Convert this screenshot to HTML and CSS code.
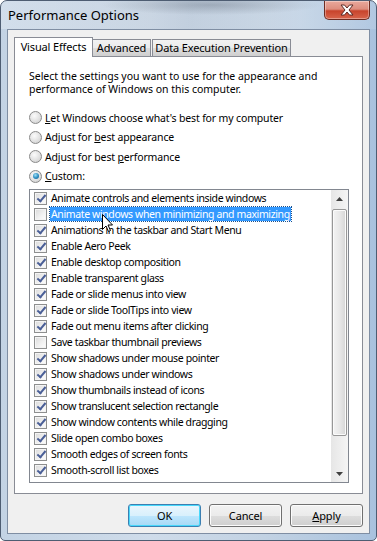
FILE: index.html
```html
<!DOCTYPE html>
<html>
<head>
    <title>Performance Options</title>
    <link rel="stylesheet" href="styles.css">
</head>
<body>
    <div class="window">
        <div class="titlebar">
            <span class="title">Performance Options</span>
            <div class="close">
                <svg width="16" height="12" viewBox="0 0 16 12">
                    <path d="M2 1 L5.5 1 L8 4 L10.5 1 L14 1 L10 6 L14 11 L10.5 11 L8 8 L5.5 11 L2 11 L6 6 Z" fill="#fff" stroke="#5b2b26" stroke-width="1"/>
                </svg>
            </div>
        </div>

        <div class="client">
            <div class="tabs">
                <div class="tab active">Visual Effects</div>
                <div class="tab adv">Advanced</div>
                <div class="tab dep">Data Execution Prevention</div>
            </div>

            <div class="panel">
                <p class="intro">Select the settings you want to use for the appearance and<br>performance of Windows on this computer.</p>

                <div class="radios">
                    <div class="radio"><span class="dot"></span><span><u>L</u>et Windows choose what's best for my computer</span></div>
                    <div class="radio"><span class="dot"></span><span>Adjust for <u>b</u>est appearance</span></div>
                    <div class="radio"><span class="dot"></span><span>Adjust for best <u>p</u>erformance</span></div>
                    <div class="radio"><span class="dot on"></span><span><u>C</u>ustom:</span></div>
                </div>

                <div class="listbox">
                    <div class="items">
                        <div class="item"><span class="cb on"></span><span class="lbl">Animate controls and elements inside windows</span></div>
                        <div class="item"><span class="cb"></span><span class="lbl selected">Animate windows when minimizing and maximizing</span></div>
                        <div class="item"><span class="cb on"></span><span class="lbl">Animations in the taskbar and Start Menu</span></div>
                        <div class="item"><span class="cb on"></span><span class="lbl">Enable Aero Peek</span></div>
                        <div class="item"><span class="cb on"></span><span class="lbl">Enable desktop composition</span></div>
                        <div class="item"><span class="cb on"></span><span class="lbl">Enable transparent glass</span></div>
                        <div class="item"><span class="cb on"></span><span class="lbl">Fade or slide menus into view</span></div>
                        <div class="item"><span class="cb on"></span><span class="lbl">Fade or slide ToolTips into view</span></div>
                        <div class="item"><span class="cb on"></span><span class="lbl">Fade out menu items after clicking</span></div>
                        <div class="item"><span class="cb"></span><span class="lbl">Save taskbar thumbnail previews</span></div>
                        <div class="item"><span class="cb on"></span><span class="lbl">Show shadows under mouse pointer</span></div>
                        <div class="item"><span class="cb on"></span><span class="lbl">Show shadows under windows</span></div>
                        <div class="item"><span class="cb on"></span><span class="lbl">Show thumbnails instead of icons</span></div>
                        <div class="item"><span class="cb on"></span><span class="lbl">Show translucent selection rectangle</span></div>
                        <div class="item"><span class="cb on"></span><span class="lbl">Show window contents while dragging</span></div>
                        <div class="item"><span class="cb on"></span><span class="lbl">Slide open combo boxes</span></div>
                        <div class="item"><span class="cb on"></span><span class="lbl">Smooth edges of screen fonts</span></div>
                        <div class="item"><span class="cb on"></span><span class="lbl">Smooth-scroll list boxes</span></div>
                    </div>
                    <div class="scrollbar">
                        <div class="arrow"><svg width="7" height="4" viewBox="0 0 7 4"><path d="M0 4 L3.5 0 L7 4 Z" fill="#404040"/></svg></div>
                        <div class="track"><div class="thumb"></div></div>
                        <div class="arrow"><svg width="7" height="4" viewBox="0 0 7 4"><path d="M0 0 L7 0 L3.5 4 Z" fill="#404040"/></svg></div>
                    </div>
                    <svg class="cursor" width="12" height="19" viewBox="0 0 12 19">
                        <path d="M0.5 0.5 L0.5 15.5 L4 12 L6.5 17.5 L8.5 16.5 L6 11 L10.5 11 Z" fill="#fff" stroke="#000" stroke-width="1"/>
                    </svg>
                </div>
            </div>

            <div class="buttons">
                <div class="btn default">OK</div>
                <div class="btn">Cancel</div>
                <div class="btn"><u>A</u>pply</div>
            </div>
        </div>
    </div>
</body>
</html>
```

FILE: styles.css
```css
body {
    margin: 0;
    padding: 0;
    background: #fff;
    font-family: "Noto Sans", "Open Sans", sans-serif;
    font-size: 10.5px;
    letter-spacing: -0.15px;
    color: #000;
}

.window {
    width: 377px;
    height: 541px;
    box-sizing: border-box;
    border: 1px solid #4e5d72;
    border-radius: 7px 7px 5px 5px;
    background: linear-gradient(90deg, #c3d3e4 0%, #cfdcea 40%, #c2d2e3 70%, #a9c2de 100%);
    display: flex;
    flex-direction: column;
    overflow: hidden;
}

.titlebar {
    height: 28px;
    flex: none;
    display: flex;
    align-items: flex-start;
    background:
        radial-gradient(ellipse 110px 10px at 210px 4px, rgba(90,100,115,0.35), rgba(90,100,115,0) 100%),
        linear-gradient(90deg, rgba(255,255,255,0.25), rgba(160,170,185,0.2) 50%, rgba(255,255,255,0.2) 80%, rgba(255,255,255,0.1));
}

.title {
    font-size: 13px;
    letter-spacing: 0;
    padding-left: 7px;
    line-height: 28px;
    color: #000;
}

.close {
    margin-left: auto;
    margin-right: 6px;
    width: 46px;
    height: 19px;
    box-sizing: border-box;
    border: 1px solid #6d2c22;
    border-top: none;
    border-radius: 0 0 5px 5px;
    background: linear-gradient(180deg, #e9a99c 0%, #dd8d7e 45%, #c8442c 55%, #d8654c 100%);
    display: flex;
    align-items: center;
    justify-content: center;
    box-shadow: inset 0 0 0 1px rgba(255,255,255,0.35);
}

.client {
    flex: 1;
    margin: 0 6px 6px 6px;
    border: 1px solid #7f8ea3;
    background: #f0f0f0;
    padding: 7px 6px 0 6px;
    display: flex;
    flex-direction: column;
}

.tabs {
    height: 20px;
    display: flex;
    align-items: flex-end;
    flex: none;
}

.tab {
    height: 17px;
    box-sizing: border-box;
    border: 1px solid #898c95;
    border-bottom: none;
    background: linear-gradient(180deg, #f2f2f2 0%, #ebebeb 50%, #dddddd 51%, #cfcfcf 100%);
    text-align: center;
    line-height: 15px;
    font-size: 11px;
    margin-bottom: 1px;
}

.tab.active {
    position: relative;
    z-index: 1;
    height: 20px;
    width: 79px;
    margin-bottom: 0;
    background: #fff;
    line-height: 18px;
}

.tab.adv {
    width: 58px;
    border-left: none;
}

.tab.dep {
    width: 139px;
    margin-left: 1px;
}

.panel {
    margin-top: -1px;
    height: 438px;
    flex: none;
    box-sizing: border-box;
    border: 1px solid #898c95;
    background: #fff;
    padding: 0 13px 0 14px;
}

.intro {
    margin: 13px 0 0 0;
    line-height: 13px;
    letter-spacing: -0.02px;
}

.radios {
    margin-top: 12px;
}

.radio {
    height: 19.5px;
    display: flex;
    align-items: center;
}

.dot {
    width: 13px;
    height: 13px;
    box-sizing: border-box;
    border-radius: 50%;
    border: 1px solid #8a8a8a;
    background: radial-gradient(circle at 40% 35%, #fbfbfb 0%, #e6e6e6 45%, #c9c9c9 100%);
    margin-right: 3px;
    position: relative;
}

.dot.on::after {
    content: "";
    position: absolute;
    left: 2.5px;
    top: 2.5px;
    width: 6px;
    height: 6px;
    border-radius: 50%;
    background: radial-gradient(circle at 40% 35%, #9fe0f7 0%, #2a8bbf 55%, #165d8c 100%);
}

.listbox {
    position: relative;
    margin-top: 3px;
    height: 294px;
    box-sizing: border-box;
    border: 1px solid #828790;
    display: flex;
}

.items {
    flex: 1;
    padding-left: 4px;
    letter-spacing: -0.38px;
}

.item {
    height: 16px;
    display: flex;
    align-items: center;
}

.cb {
    width: 13px;
    height: 13px;
    box-sizing: border-box;
    border: 1px solid #8e8f8f;
    background: linear-gradient(135deg, #d9d9d9 0%, #f2f2f2 60%, #fdfdfd 100%);
    box-shadow: inset 0 0 0 1px #f4f4f4;
    margin-right: 3px;
    position: relative;
}

.cb.on::after {
    content: "";
    position: absolute;
    left: 3.5px;
    top: 0.5px;
    width: 3px;
    height: 7px;
    border-right: 2px solid #4a5f97;
    border-bottom: 2px solid #4a5f97;
    transform: rotate(40deg);
}

.lbl {
    padding: 0 1px;
    line-height: 14px;
}

.lbl.selected {
    background: #3399ff;
    color: #fff;
    outline: 1px dotted #1a4f8a;
}

.scrollbar {
    width: 17px;
    flex: none;
    display: flex;
    flex-direction: column;
    background: linear-gradient(90deg, #e6e6e6, #f5f5f5);
}

.arrow {
    height: 17px;
    flex: none;
    display: flex;
    align-items: center;
    justify-content: center;
}

.track {
    flex: 1;
    padding-top: 2px;
}

.thumb {
    margin: 0 1px;
    height: 227px;
    box-sizing: border-box;
    border: 1px solid #979797;
    border-radius: 2px;
    background: linear-gradient(90deg, #f3f3f3 0%, #e8e8e8 50%, #d6d6d6 100%);
    box-shadow: inset 0 0 0 1px #fbfbfb;
}

.cursor {
    position: absolute;
    left: 72px;
    top: 24px;
}

.buttons {
    display: flex;
    justify-content: flex-end;
    gap: 8px;
    margin-top: 10px;
}

.btn {
    width: 73px;
    height: 23px;
    box-sizing: border-box;
    border: 1px solid #707070;
    border-radius: 3px;
    background: linear-gradient(180deg, #f2f2f2 0%, #ebebeb 50%, #dddddd 51%, #cfcfcf 100%);
    box-shadow: inset 0 0 0 1px #fcfcfc;
    text-align: center;
    line-height: 21px;
    font-size: 11px;
}

.btn.default {
    border-color: #3c7fb1;
    background: linear-gradient(180deg, #eaf6fd 0%, #d9f0fc 50%, #bee6fd 51%, #a7d9f5 100%);
    box-shadow: inset 0 0 0 1px #48d8fb;
}
```
